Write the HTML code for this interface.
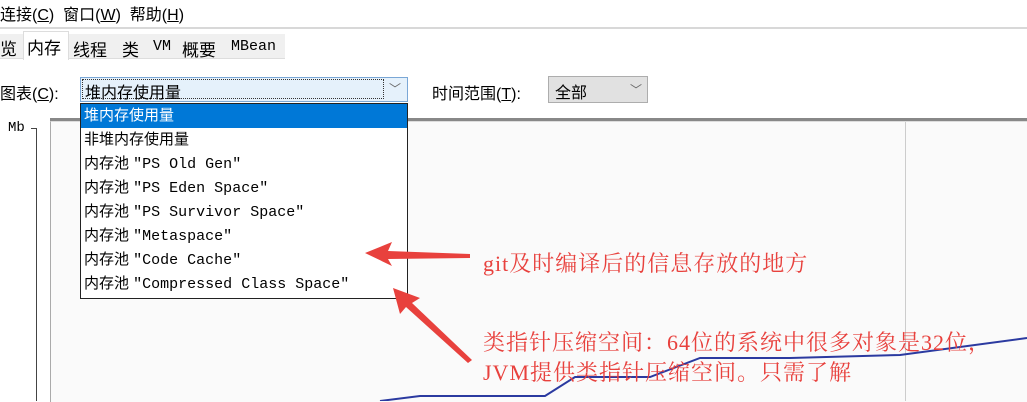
<!DOCTYPE html>
<html><head><meta charset="utf-8"><style>
body{margin:0;width:1027px;height:401px;background:#fff;position:relative;overflow:hidden;font-family:"Liberation Sans","Noto Sans CJK SC",sans-serif;color:#000}
.a{position:absolute;white-space:nowrap}
.m{font-family:"Liberation Mono","Noto Sans CJK SC",monospace}
.item{height:24px;line-height:24px;font-size:15px;padding-left:3px}
.r{font-size:22px;letter-spacing:1px;color:#e8413d;font-family:'Liberation Serif','Noto Serif CJK SC',serif}
</style></head><body>
<div class="a" style="left:0;top:1px;font-size:16px;">连接(<u>C</u>)&nbsp; 窗口(<u>W</u>)&nbsp; 帮助(<u>H</u>)</div>
<div class="a" style="left:0;top:27px;width:1027px;height:2px;background:#d8d8d8"></div>
<div class="a" style="left:0;top:34px;width:285px;height:24px;background:#f0f0f0;border-bottom:1px solid #ddd"></div>
<div class="a" style="left:23px;top:31px;width:44px;height:28px;background:#fff;border:1px solid #ddd;border-bottom:none"></div>
<div class="a" style="left:0;top:35px;font-size:17px;">览</div>
<div class="a" style="left:27px;top:34px;font-size:17px;">内存</div>
<div class="a" style="left:73px;top:36px;font-size:17px;">线程</div>
<div class="a" style="left:122px;top:36px;font-size:17px;">类</div>
<div class="a m" style="left:153px;top:38px;font-size:15px;">VM</div>
<div class="a" style="left:182px;top:36px;font-size:17px;">概要</div>
<div class="a m" style="left:231px;top:38px;font-size:15px;">MBean</div>
<div class="a" style="left:0;top:80px;font-size:16px;">图表(<u>C</u>):</div>
<div class="a" style="left:80px;top:77px;width:328px;height:25px;background:#e5f1fb;border:1px solid #7aa7d6;box-sizing:border-box"></div>
<div class="a" style="left:82px;top:79px;width:302px;height:20px;border:1px dotted #333;box-sizing:border-box"></div>
<div class="a" style="left:85px;top:79px;font-size:16px;">堆内存使用量</div>
<div class="a" style="left:389px;top:80px;font-size:12px;color:#666">﹀</div>
<div class="a" style="left:432px;top:80px;font-size:16px;">时间范围(<u>T</u>):</div>
<div class="a" style="left:548px;top:76px;width:100px;height:27px;background:#e1e1e1;border:1px solid #adadad;box-sizing:border-box"></div>
<div class="a" style="left:555px;top:79px;font-size:16px;">全部</div>
<div class="a" style="left:630px;top:81px;font-size:12px;color:#666">﹀</div>
<div class="a m" style="left:8px;top:120px;font-size:14px;">Mb</div>
<div class="a" style="left:36px;top:128px;width:1px;height:273px;background:#444"></div>
<div class="a" style="left:31px;top:128px;width:6px;height:1px;background:#444"></div>
<div class="a" style="left:50px;top:118px;width:977px;height:3px;background:#888"></div>
<div class="a" style="left:50px;top:121px;width:977px;height:280px;background:#fafafa;border-left:1px solid #aaa;border-top:1px solid #ddd"></div>
<div class="a" style="left:905px;top:122px;width:1px;height:279px;background:#ccc"></div>
<svg class="a" style="left:0;top:0" width="1027" height="401">
<polyline points="380,401 420,396 545,396 575,377 650,377 700,358 790,358 900,355 1027,338" fill="none" stroke="#2b3aa0" stroke-width="2"/>
</svg>
<div class="a" style="left:80px;top:103px;width:328px;height:196px;background:#fff;border:1px solid #222;box-sizing:border-box">
<div class="item" style="background:#0078d7;color:#fff">堆内存使用量</div>
<div class="item">非堆内存使用量</div>
<div class="item">内存池 <span class="m">"PS Old Gen"</span></div>
<div class="item">内存池 <span class="m">"PS Eden Space"</span></div>
<div class="item">内存池 <span class="m">"PS Survivor Space"</span></div>
<div class="item">内存池 <span class="m">"Metaspace"</span></div>
<div class="item">内存池 <span class="m">"Code Cache"</span></div>
<div class="item">内存池 <span class="m">"Compressed Class Space"</span></div>
</div>
<svg class="a" style="left:0;top:0" width="1027" height="401">
<polygon points="365,253 392,242 388,251 470,254 470,258 388,259 392,266" fill="#e8413d"/>
<polygon points="393,288 420,298 412,303 472,360 468,363 406,307 400,314" fill="#e8413d"/>
</svg>
<div class="a r" style="left:483px;top:247px;">git及时编译后的信息存放的地方</div>
<div class="a r" style="left:483px;top:326px;">类指针压缩空间：64位的系统中很多对象是32位，</div>
<div class="a r" style="left:483px;top:356px;">JVM提供类指针压缩空间。只需了解</div>
</body></html>
